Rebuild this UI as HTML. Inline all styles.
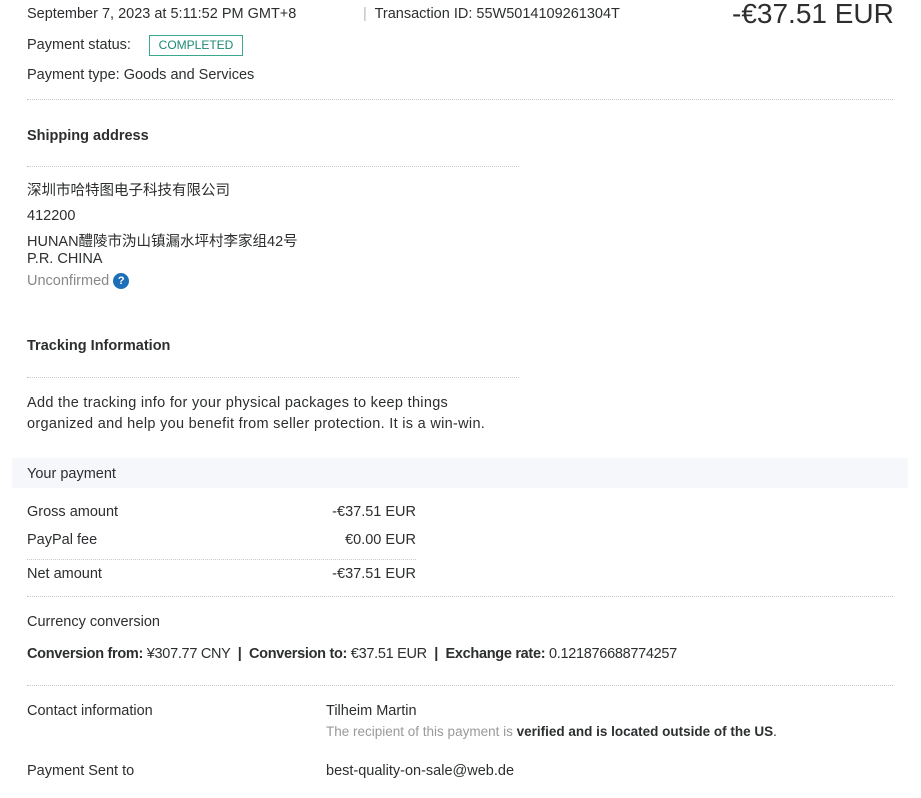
<!DOCTYPE html>
<html><head><meta charset="utf-8"><style>
*{margin:0;padding:0;box-sizing:border-box}
body{width:921px;height:798px;background:#fff;font-family:"Liberation Sans","Noto Sans CJK SC",sans-serif;font-size:14.5px;color:#2c2e2f;position:relative;overflow:hidden}
.a{position:absolute;white-space:nowrap}
.hr{position:absolute;border-top:1px dotted #c8c8c8;height:0}
b{font-weight:bold}
</style></head><body>
<div class="a" style="left:27px;top:6px">September 7, 2023 at 5:11:52 PM GMT+8</div>
<div class="a" style="left:363px;top:6px"><span style="color:#bbb">|</span>&nbsp; Transaction ID: 55W5014109261304T</div>
<div class="a" style="left:732px;top:-2px;font-size:28px">-€37.51 EUR</div>
<div class="a" style="left:27px;top:37px">Payment status:</div>
<div class="a" style="left:149px;top:35px;width:94px;height:21px;border:1px solid #3aa88f;color:#1a8a73;font-size:12px;text-align:center;line-height:19px">COMPLETED</div>
<div class="a" style="left:27px;top:67px">Payment type: Goods and Services</div>
<div class="hr" style="left:27px;top:99px;width:866px"></div>
<div class="a" style="left:27px;top:128px;font-weight:bold">Shipping address</div>
<div class="hr" style="left:27px;top:166px;width:492px"></div>
<div class="a" style="left:27px;top:179px">深圳市哈特图电子科技有限公司</div>
<div class="a" style="left:27px;top:208px">412200</div>
<div class="a" style="left:27px;top:230px">HUNAN醴陵市沩山镇漏水坪村李家组42号</div>
<div class="a" style="left:27px;top:251px">P.R. CHINA</div>
<div class="a" style="left:27px;top:273px;color:#888">Unconfirmed <span style="display:inline-block;width:16px;height:16px;border-radius:50%;background:#1d6fb8;color:#fff;font-size:11px;text-align:center;line-height:16px;font-weight:bold;vertical-align:1px">?</span></div>
<div class="a" style="left:27px;top:338px;font-weight:bold">Tracking Information</div>
<div class="hr" style="left:27px;top:377px;width:492px"></div>
<div class="a" style="left:27px;top:395px;letter-spacing:0.3px">Add the tracking info for your physical packages to keep things</div>
<div class="a" style="left:27px;top:416px;letter-spacing:0.3px">organized and help you benefit from seller protection. It is a win-win.</div>
<div class="a" style="left:12px;top:458px;width:896px;height:30px;background:#f5f7fa"></div>
<div class="a" style="left:27px;top:466px">Your payment</div>
<div class="a" style="left:27px;top:504px">Gross amount</div>
<div class="a" style="left:27px;top:532px">PayPal fee</div>
<div class="hr" style="left:27px;top:559px;width:389px"></div>
<div class="a" style="left:27px;top:566px">Net amount</div>
<div class="a" style="right:505px;top:504px">-€37.51 EUR</div>
<div class="a" style="right:505px;top:532px">€0.00 EUR</div>
<div class="a" style="right:505px;top:566px">-€37.51 EUR</div>
<div class="hr" style="left:27px;top:596px;width:866px"></div>
<div class="a" style="left:27px;top:614px">Currency conversion</div>
<div class="a" style="left:27px;top:646px;letter-spacing:-0.3px"><b>Conversion from:</b> ¥307.77 CNY &nbsp;<b>|</b>&nbsp; <b>Conversion to:</b> €37.51 EUR &nbsp;<b>|</b>&nbsp; <b>Exchange rate:</b> 0.121876688774257</div>
<div class="hr" style="left:27px;top:685px;width:866px"></div>
<div class="a" style="left:27px;top:703px">Contact information</div>
<div class="a" style="left:326px;top:703px">Tilheim Martin</div>
<div class="a" style="left:326px;top:724px;font-size:13.5px;color:#999">The recipient of this payment is <b style="color:#2c2e2f">verified and is located outside of the US</b><span style="color:#2c2e2f">.</span></div>
<div class="a" style="left:27px;top:763px">Payment Sent to</div>
<div class="a" style="left:326px;top:763px">best-quality-on-sale@web.de</div>
</body></html>
